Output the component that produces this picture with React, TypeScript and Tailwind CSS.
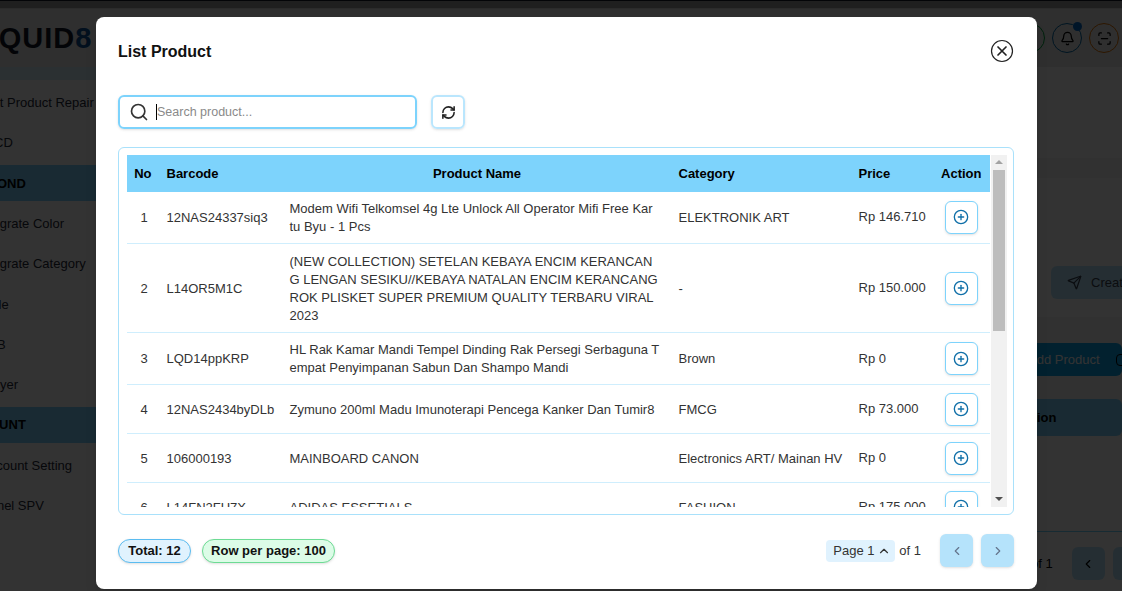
import { Bell, ChevronLeft, ChevronRight, ChevronUp, CirclePlus, RefreshCw, ScanLine, Search, Send } from "lucide-react";

const SIDE_ROWS = [
  { label: "Edit Product Repair", shift: "-ml-[19px]", band: false },
  { label: "CD", shift: "-ml-[6px]", band: false },
  { label: "OND", shift: "-ml-[3px]", band: true },
  { label: "Migrate Color", shift: "-ml-[14px]", band: false },
  { label: "Migrate Category", shift: "-ml-[14px]", band: false },
  { label: "Role", shift: "-ml-[18px]", band: false },
  { label: "B", shift: "-ml-[3px]", band: false },
  { label: "Buyer", shift: "-ml-[16px]", band: false },
  { label: "OUNT", shift: "-ml-[11px]", band: true },
  { label: "Account Setting", shift: "-ml-[19px]", band: false },
  { label: "Panel SPV", shift: "-ml-[19px]", band: false },
];

// the name column wraps mid-word, so the lines are kept as shown
const PRODUCTS = [
  { no: 1, barcode: "12NAS24337siq3", lines: ["Modem Wifi Telkomsel 4g Lte Unlock All Operator Mifi Free Kar", "tu Byu - 1 Pcs"], category: "ELEKTRONIK ART", price: "Rp 146.710", h: "h-[52px]" },
  { no: 2, barcode: "L14OR5M1C", lines: ["(NEW COLLECTION) SETELAN KEBAYA ENCIM KERANCAN", "G LENGAN SESIKU//KEBAYA NATALAN ENCIM KERANCANG", "ROK PLISKET SUPER PREMIUM QUALITY TERBARU VIRAL", "2023"], category: "-", price: "Rp 150.000", h: "h-[89px]" },
  { no: 3, barcode: "LQD14ppKRP", lines: ["HL Rak Kamar Mandi Tempel Dinding Rak Persegi Serbaguna T", "empat Penyimpanan Sabun Dan Shampo Mandi"], category: "Brown", price: "Rp 0", h: "h-[52px]" },
  { no: 4, barcode: "12NAS2434byDLb", lines: ["Zymuno 200ml Madu Imunoterapi Pencega Kanker Dan Tumir8"], category: "FMCG", price: "Rp 73.000", h: "h-[49px]" },
  { no: 5, barcode: "106000193", lines: ["MAINBOARD CANON"], category: "Electronics ART/ Mainan HV", price: "Rp 0", h: "h-[49px]" },
  { no: 6, barcode: "L14FN2FU7X", lines: ["ADIDAS ESSETIALS"], category: "FASHION", price: "Rp 175.000", h: "h-[49px]" },
];

function Background() {
  return (
    <div className="flex h-full flex-col bg-white">
      <div className="h-[1px] bg-[#111827]" />
      <div className="h-[7px] bg-[#9a9a9a]" />
      <div className="h-[1px] bg-[#d4d4d4]" />
      <div className="flex h-[58px] items-center justify-between bg-[#e8e8e8] pr-[3px]">
        <div className="-ml-[29px] flex text-[29px] font-bold leading-none tracking-[1px] text-[#111827]">
          LIQUID<span className="text-[#0b4f94]">8</span>
        </div>
        <div className="flex items-center gap-[7px]">
          <div className="size-[30px] rounded-full border border-green-600" />
          <div className="relative flex size-[30px] items-center justify-center rounded-full border border-sky-700">
            <Bell size={15} className="text-black" />
            <span className="absolute -right-[1px] -top-[2px] size-[9px] rounded-full bg-[#0369c9]" />
          </div>
          <div className="flex size-[30px] items-center justify-center rounded-full border border-amber-600">
            <ScanLine size={15} className="text-black" />
          </div>
        </div>
      </div>
      <div className="flex min-h-0 flex-1">
        <aside className="w-[96px] shrink-0 overflow-hidden bg-white">
          <div className="h-[13px] bg-[#d5eefa]" />
          {SIDE_ROWS.map((row, i) => (
            <div
              key={row.label}
              className={`flex items-center whitespace-nowrap text-[13px] ${i === 0 ? "h-[43px] pt-[2px]" : "h-[40.3px]"} ${row.band ? "" : "text-[#1f2937]"}`}
            >
              {row.band ? (
                <div className="flex h-[36px] w-full items-center bg-[#7dd3fc] font-bold text-black">
                  <span className={row.shift}>{row.label}</span>
                </div>
              ) : (
                <span className={row.shift}>{row.label}</span>
              )}
            </div>
          ))}
        </aside>
        <main className="flex min-w-0 flex-1 flex-col overflow-hidden bg-[#f5f5f5]">
          <div className="h-[91px] shrink-0 bg-white" />
          <div className="h-[20px] shrink-0" />
          <div className="flex h-[139px] shrink-0 items-end justify-end bg-white pb-[18px]">
            <div className="-mr-[19px] flex h-[33px] w-[90px] shrink-0 items-center gap-[9px] rounded-md bg-[#bae6fd] pl-[16px] text-[13px] text-[#374151]">
              <Send size={15} className="shrink-0" />
              <span>Create</span>
            </div>
          </div>
          <div className="h-[26px] shrink-0" />
          <div className="flex h-[33px] shrink-0 items-center rounded-md bg-[#0ea5e9] pl-[932px] text-[13px] text-white">
            <span className="whitespace-nowrap">Add Product</span>
            <span className="ml-[16px] size-[12px] shrink-0 rounded-sm border border-black" />
          </div>
          <div className="h-[23px] shrink-0" />
          <div className="flex h-[37px] shrink-0 items-center rounded-md bg-[#7dd3fc] pl-[920px] text-[13px] font-bold">Action</div>
          <div className="flex-1 bg-white" />
          <div className="flex h-[60px] shrink-0 items-center border-t border-sky-300 bg-white pl-[935px] pt-[4px] text-[13px]">
            <span className="shrink-0 whitespace-nowrap">of 1</span>
            <span className="ml-[19px] flex size-[33px] shrink-0 items-center justify-center rounded-md bg-[#bae6fd]"><ChevronLeft size={14} /></span>
            <span className="ml-[8px] flex size-[33px] shrink-0 items-center justify-center rounded-md bg-[#bae6fd]"><ChevronRight size={14} /></span>
          </div>
        </main>
      </div>
    </div>
  );
}

function Scrollbar() {
  return (
    <div className="flex w-[16px] shrink-0 flex-col items-center bg-[#f1f1f1]">
      <div className="flex h-[15px] w-full items-center justify-center">
        <span className="border-x-[4px] border-b-[4px] border-x-transparent border-b-[#a3a3a3]" />
      </div>
      <div className="h-[161px] w-[12px] bg-[#bdbdbd]" />
      <div className="flex-1" />
      <div className="flex h-[15px] w-full items-center justify-center">
        <span className="border-x-[4px] border-t-[4px] border-x-transparent border-t-[#505050]" />
      </div>
    </div>
  );
}

function ProductTable() {
  return (
    <div className="mt-[18px] h-[368px] rounded-md border-[1.5px] border-[#a9e1fb] py-[6.5px] pl-[7.5px] pr-[6.5px]">
      <div className="flex h-[352px] overflow-hidden">
        <div className="min-w-0 flex-1 overflow-hidden">
          <table className="w-[863px] table-fixed border-collapse text-[13px] leading-[18px] text-[#333]">
            <colgroup>
              <col className="w-[31px]" />
              <col className="w-[132px]" />
              <col className="w-[389px]" />
              <col className="w-[180px]" />
              <col className="w-[131px]" />
            </colgroup>
            <thead>
              <tr className="h-[37px] bg-[#7dd3fc] font-bold text-black">
                <th className="pt-[1px] text-right font-bold"><span className="pr-[6px]">No</span></th>
                <th className="pl-[9px] pt-[1px] text-left font-bold">Barcode</th>
                <th className="pt-[1px] text-center font-bold"><span className="pr-[14px]">Product Name</span></th>
                <th className="pt-[1px] text-left font-bold">Category</th>
                <th className="p-0 pt-[1px] font-bold">
                  <div className="flex justify-between pr-[8px]">
                    <span>Price</span>
                    <span>Action</span>
                  </div>
                </th>
              </tr>
            </thead>
            <tbody>
              {PRODUCTS.map((p) => (
                <tr key={p.no} className={`${p.h} border-b border-[#cfeefd]`}>
                  <td className="pl-[14px] pt-[1px] text-left">{p.no}</td>
                  <td className="pl-[9px] pt-[1px]">{p.barcode}</td>
                  <td className="whitespace-nowrap pt-[1px]">
                    {p.lines.map((line) => (
                      <div key={line}>{line}</div>
                    ))}
                  </td>
                  <td className="whitespace-nowrap pt-[1px]">{p.category}</td>
                  <td className="p-0">
                    <div className="flex items-center justify-between pr-[12px]">
                      <span>{p.price}</span>
                      <span className="flex size-[33px] items-center justify-center rounded-md border-[1.5px] border-[#7dd3fc] bg-white shadow-sm">
                        <CirclePlus size={16} strokeWidth={2} className="text-[#0f6fa8]" />
                      </span>
                    </div>
                  </td>
                </tr>
              ))}
            </tbody>
          </table>
        </div>
        <Scrollbar />
      </div>
    </div>
  );
}

export default function App() {
  return (
    <div className="relative h-[591px] w-[1122px] overflow-hidden font-['Liberation_Sans',Arial,sans-serif]">
      <Background />
      <div className="absolute inset-0 bg-black/80" />
      <div className="absolute left-[96px] top-[17px] flex h-[572px] w-[941px] flex-col rounded-lg bg-white pl-[22px] pr-[23px] shadow-lg">
        <div className="flex h-[68px] shrink-0 items-center justify-between">
          <h1 className="mt-[1px] text-[16px] font-bold text-[#111]">List Product</h1>
          <svg width="24" height="24" viewBox="0 0 24 24" fill="none" stroke="#222">
            <circle cx="12" cy="12" r="10.5" strokeWidth="1.2" />
            <path d="M8 8l8 8M16 8l-8 8" strokeWidth="1.7" strokeLinecap="round" />
          </svg>
        </div>
        <div className="mt-[10px] flex shrink-0 gap-[14px]">
          <div className="relative flex h-[34px] w-[299px] items-center rounded-md border-2 border-[#7dd3fc] pl-[9px] shadow-sm">
            <Search size={20} className="shrink-0 text-[#333]" />
            <span className="ml-[7px] h-[16px] w-[1px] shrink-0 bg-black" />
            <input
              readOnly
              placeholder="Search product..."
              className="min-w-0 flex-1 bg-transparent text-[12.5px] outline-none placeholder:text-[#8a8a8a]"
            />
          </div>
          <div className="flex size-[34px] items-center justify-center rounded-md border-2 border-[#bae6fd] shadow-sm">
            <RefreshCw size={15} strokeWidth={2.5} className="text-[#222]" />
          </div>
        </div>
        <ProductTable />
        <div className="flex flex-1 items-center justify-between pb-[3px]">
          <div className="flex items-center gap-[11px] text-[13px] font-bold text-[#111]">
            <span className="flex h-[24px] w-[73px] items-center justify-center rounded-full border-[1.5px] border-[#5bbcf0] bg-[#e0f2fe] shadow-sm">Total: 12</span>
            <span className="flex h-[24px] w-[133px] items-center justify-center rounded-full border-[1.5px] border-[#6ddb94] bg-[#dcfce7] shadow-sm">Row per page: 100</span>
          </div>
          <div className="flex items-center text-[13px] text-[#333]">
            <span className="flex h-[22px] w-[69px] items-center gap-[2px] rounded-[4px] bg-[#e0f2fe] pl-[7px]">
              Page 1 <ChevronUp size={14} strokeWidth={2} />
            </span>
            <span className="ml-[4px]">of 1</span>
            <span className="ml-[19px] flex size-[33px] items-center justify-center rounded-md bg-[#b5e3fb] text-[#64748b] shadow-sm"><ChevronLeft size={14} /></span>
            <span className="ml-[8px] flex size-[33px] items-center justify-center rounded-md bg-[#b5e3fb] text-[#64748b] shadow-sm"><ChevronRight size={14} /></span>
          </div>
        </div>
      </div>
    </div>
  );
}
